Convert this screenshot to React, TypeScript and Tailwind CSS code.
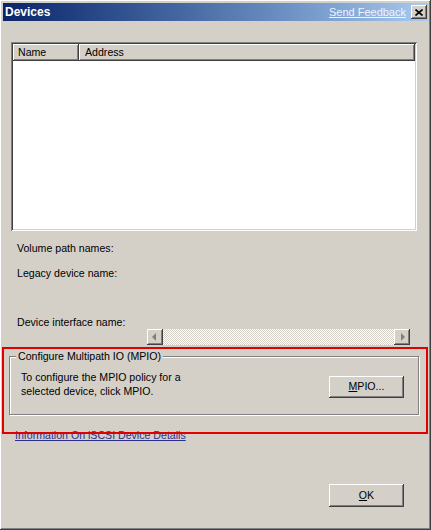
import React from "react";

const raised =
  "shadow-[inset_-1px_-1px_#404040,inset_1px_1px_#ffffff,inset_-2px_-2px_#808080,inset_2px_2px_#d4d0c8]";

function ArrowBtn({ dir }: { dir: "left" | "right" }) {
  return (
    <div className={`w-[16px] h-[16px] bg-[#d4d0c8] flex items-center justify-center ${raised}`}>
      <svg width="8" height="8" viewBox="0 0 8 8">
        {dir === "left" ? (
          <polygon points="5,0 1,4 5,8" fill="#808080" />
        ) : (
          <polygon points="3,0 7,4 3,8" fill="#808080" />
        )}
      </svg>
    </div>
  );
}

export default function App() {
  return (
    <div
      className="w-[431px] h-[530px] relative bg-[#d4d0c8] p-[3px] flex flex-col text-[10.6px] text-black shadow-[inset_-1px_-1px_#404040,inset_1px_1px_#ffffff,inset_-2px_-2px_#808080,inset_2px_2px_#d4d0c8]"
      style={{ fontFamily: '"Liberation Sans", Arial, sans-serif' }}
    >
      {/* Title bar */}
      <div className="h-[18px] flex items-center justify-between pl-[2px] pr-[1px] bg-gradient-to-r from-[#0a246a] to-[#a6caf0]">
        <span className="text-white font-bold text-[12px]">Devices</span>
        <div className="flex items-center gap-[5px]">
          <span className="text-[#eef4ff] underline text-[11px]">Send Feedback</span>
          <div className={`w-[16px] h-[14px] bg-[#d4d0c8] flex items-center justify-center ${raised}`}>
            <svg width="8" height="7" viewBox="0 0 8 7">
              <path d="M0.5 0.5 L7.5 6.5 M7.5 0.5 L0.5 6.5" stroke="#000" strokeWidth="1.6" />
            </svg>
          </div>
        </div>
      </div>

      {/* List */}
      <div className="ml-[8px] mt-[21px] w-[406px] h-[189px] bg-white p-[2px] shadow-[inset_1px_1px_#808080,inset_-1px_-1px_#ffffff,inset_2px_2px_#404040,inset_-2px_-2px_#d4d0c8]">
        <div className="flex h-[17px] bg-[#d4d0c8]">
          <div className={`w-[66px] h-full pl-[5px] flex items-center ${raised}`}>Name</div>
          <div className={`flex-1 h-full pl-[6px] flex items-center ${raised}`}>Address</div>
        </div>
      </div>

      {/* Labels */}
      <div className="ml-[14px] mt-[11px] leading-[13px]">Volume path names:</div>
      <div className="ml-[14px] mt-[12px] leading-[13px]">Legacy device name:</div>
      <div className="ml-[14px] mt-[36px] leading-[13px]">Device interface name:</div>

      {/* Scrollbar */}
      <div className="ml-[144px] mt-[0px] w-[263px] h-[16px] flex">
        <ArrowBtn dir="left" />
        <div className="flex-1 bg-[image:repeating-conic-gradient(#ffffff_0_25%,#d4d0c8_0_50%)] bg-[length:2px_2px]" />
        <ArrowBtn dir="right" />
      </div>

      {/* Group box */}
      <div className="relative ml-[6px] mt-[11px] w-[410px] h-[59px] border border-[#808080] shadow-[1px_1px_#ffffff,inset_1px_1px_#ffffff]">
        <span className="absolute left-[6px] -top-[8px] bg-[#d4d0c8] px-[2px] leading-[14px]">
          Configure Multipath IO (MPIO)
        </span>
        <div className="flex justify-between pl-[11px] pr-[14px] pt-[12px]">
          <div className="leading-[14px] pt-[1px]">
            <div>To configure the MPIO policy for a</div>
            <div>selected device, click MPIO.</div>
          </div>
          <div className={`w-[75px] h-[22px] bg-[#d4d0c8] flex items-center justify-center mt-[7px] ${raised}`}>
            <span>
              <span className="underline">M</span>PIO...
            </span>
          </div>
        </div>
      </div>

      {/* Link */}
      <div className="ml-[12px] mt-[14px] leading-[13px] text-[#2a2f8f] underline">
        Information On iSCSI Device Details
      </div>

      {/* OK */}
      <div className="flex justify-end pr-[24px] mt-[42px]">
        <div className={`w-[75px] h-[23px] bg-[#d4d0c8] flex items-center justify-center ${raised}`}>
          <span>
            <span className="underline">O</span>K
          </span>
        </div>
      </div>

      {/* Red annotation */}
      <div className="absolute left-[2px] top-[347px] w-[426px] h-[87px] border-2 border-[#e00000] pointer-events-none" />
    </div>
  );
}
